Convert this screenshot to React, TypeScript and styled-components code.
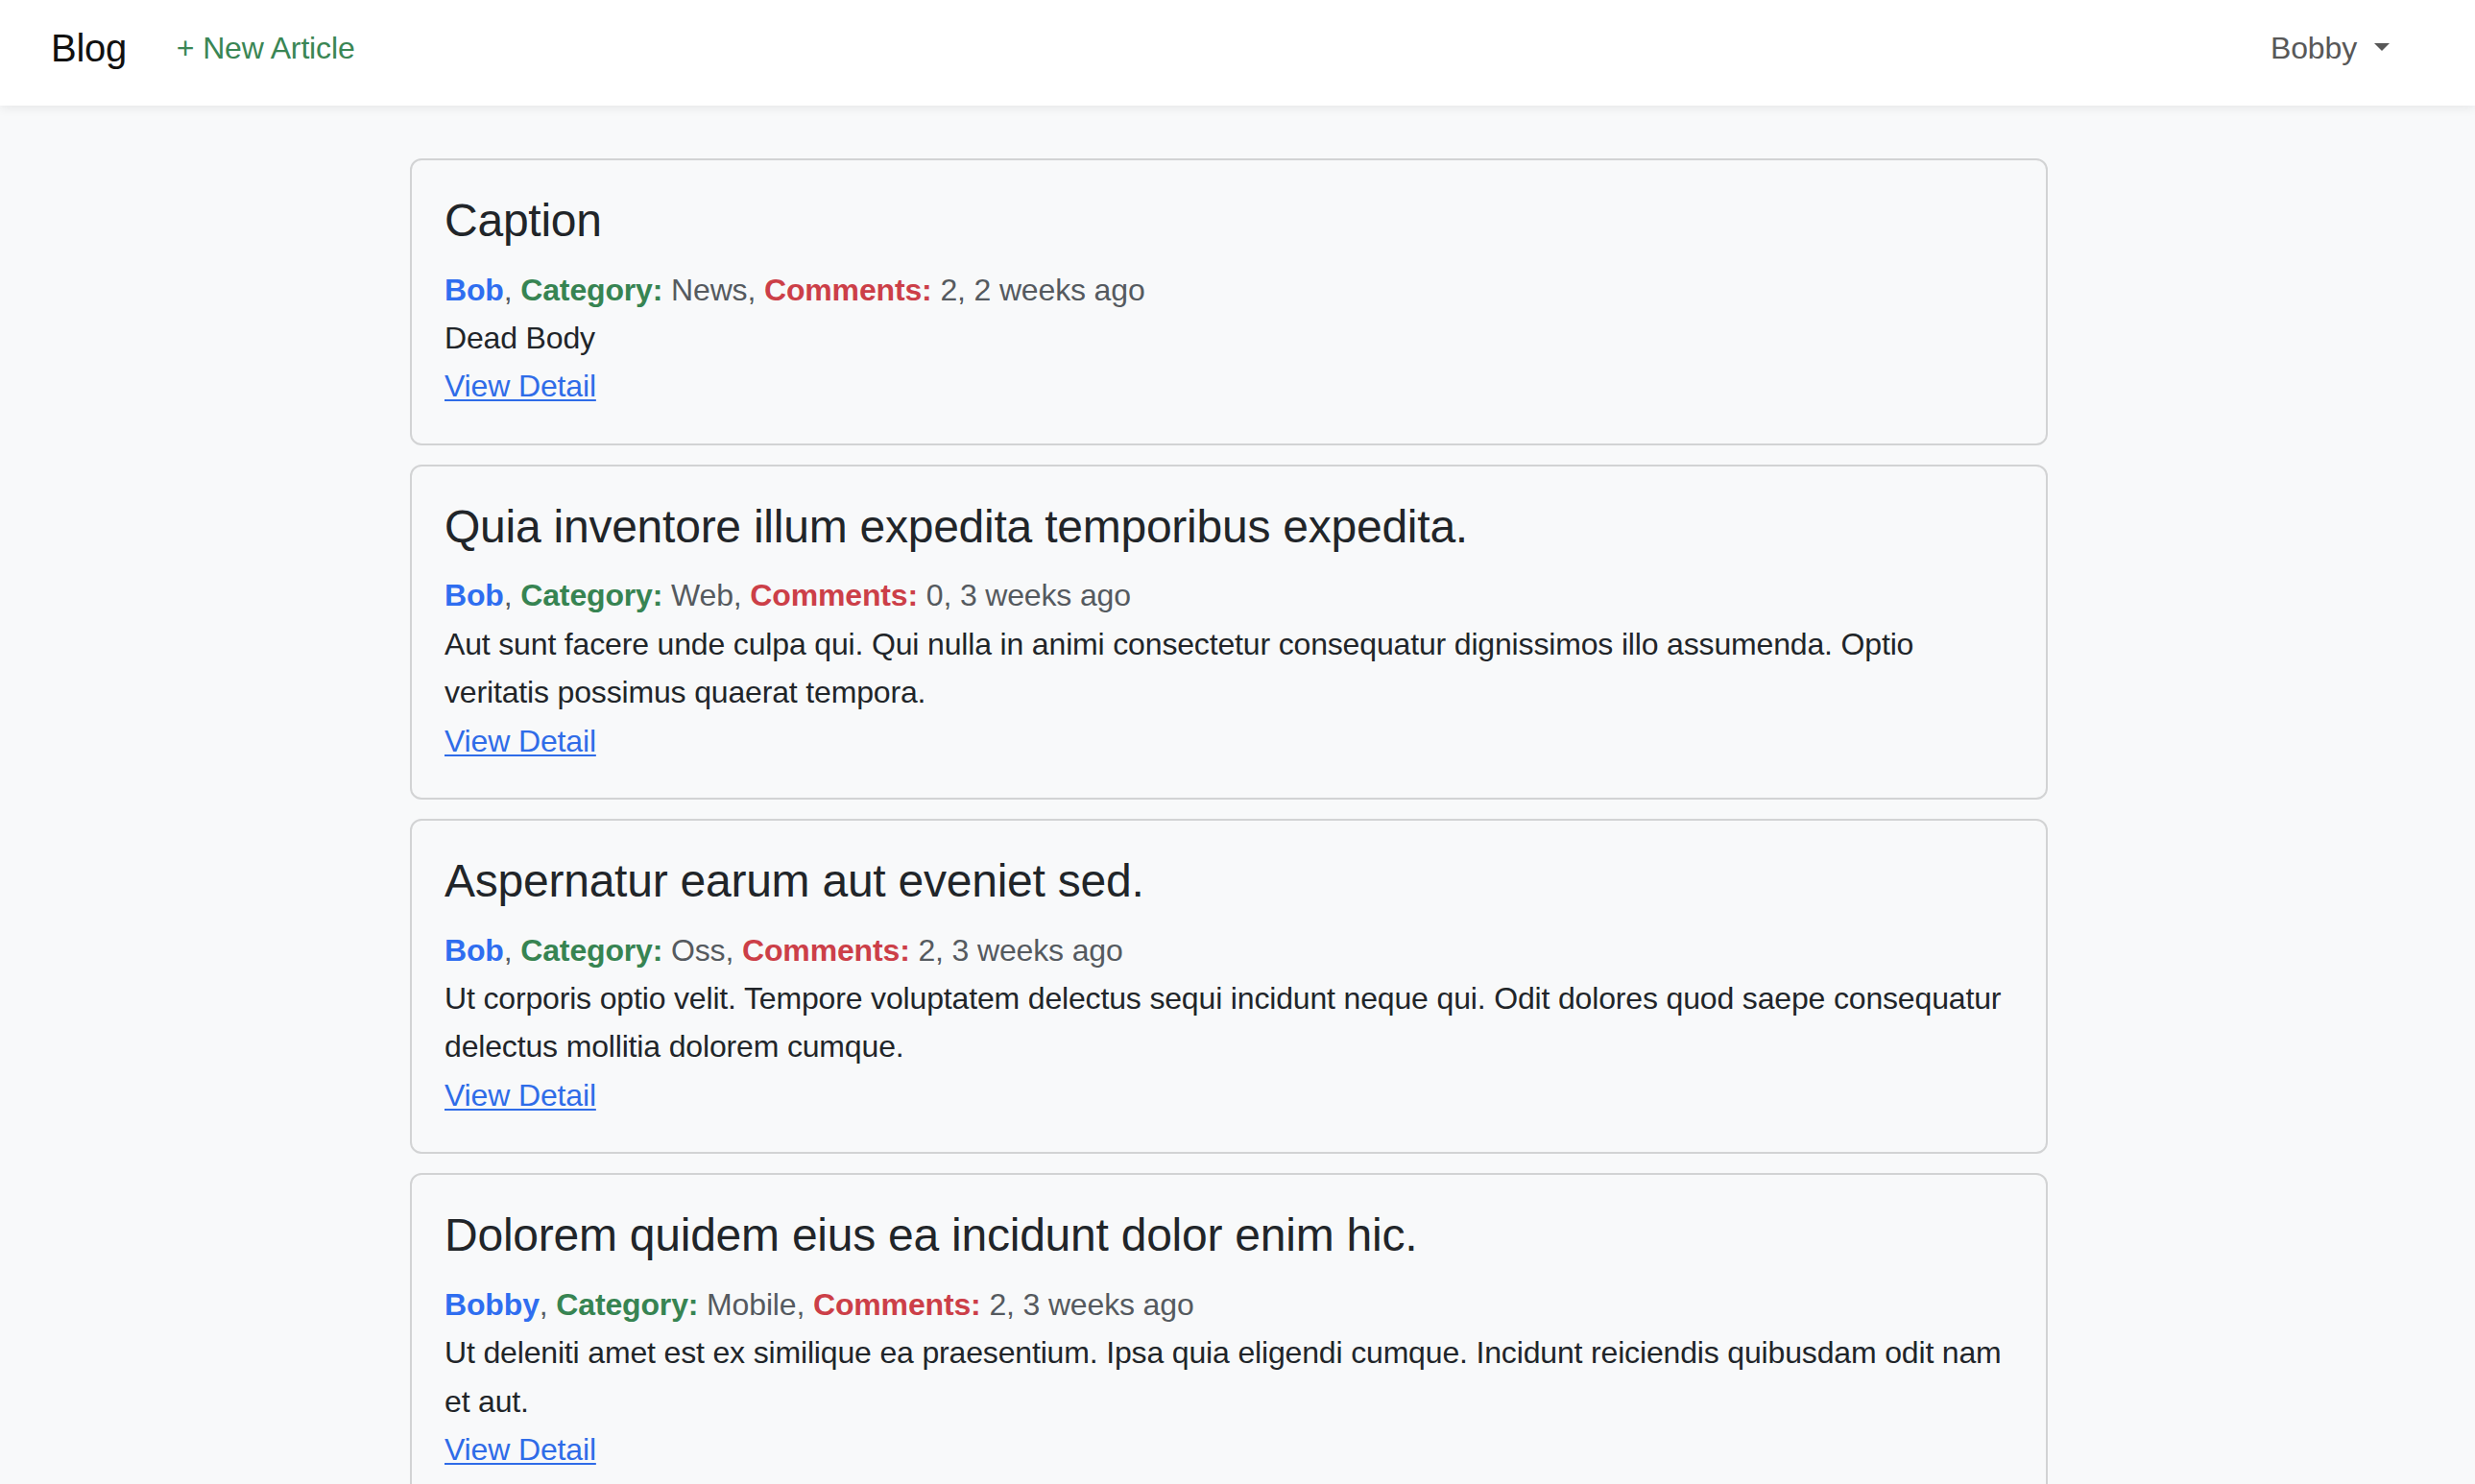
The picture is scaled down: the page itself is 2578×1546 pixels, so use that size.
import React from "react";
import styled, { createGlobalStyle } from "styled-components";

const GlobalStyle = createGlobalStyle`
  html, body {
    margin: 0;
    padding: 0;
    background: #f8f9fa;
    font-family: "Liberation Sans", Arial, Helvetica, sans-serif;
    color: #212529;
  }
  * { box-sizing: border-box; }
`;

const Header = styled.header`
  height: 110px;
  background: #ffffff;
  box-shadow: 0 3px 10px rgba(0, 0, 0, 0.07);
  display: flex;
  align-items: center;
  padding: 0 89px 10px 53px;
`;

const Brand = styled.a`
  font-size: 40px;
  line-height: 60px;
  color: #111;
  text-decoration: none;
  margin-right: 52px;
  letter-spacing: -0.3px;
`;

const NavLink = styled.a`
  font-size: 32px;
  line-height: 48px;
  color: #3a8654;
  text-decoration: none;
  letter-spacing: -0.15px;
`;

const Spacer = styled.div`
  flex: 1;
`;

const UserMenu = styled.div`
  display: flex;
  align-items: center;
  gap: 18px;
  font-size: 32px;
  line-height: 48px;
  color: #585858;
  letter-spacing: -0.15px;
`;

const Caret = styled.span`
  width: 0;
  height: 0;
  border-top: 8px solid #585858;
  border-left: 8.5px solid transparent;
  border-right: 8.5px solid transparent;
  margin-top: -2px;
`;

const Main = styled.main`
  margin: 55px 0 0 427px;
  width: 1706px;
  display: flex;
  flex-direction: column;
  gap: 20px;
  padding-bottom: 40px;
`;

const Card = styled.article`
  border: 2px solid #d2d3d4;
  border-radius: 12px;
  background: #f8f9fa;
  padding: 34px 30px 34px 34px;
`;

const Title = styled.h3`
  margin: 0 0 18px;
  font-size: 48px;
  line-height: 57.6px;
  font-weight: 400;
  color: #212529;
  letter-spacing: -0.24px;
`;

const Meta = styled.div`
  font-size: 32px;
  line-height: 50.4px;
  color: #555a5f;
  letter-spacing: -0.15px;
`;

const MetaStrong = styled.strong<{ $tone: "author" | "category" | "comments" }>`
  font-weight: 700;
  color: ${({ $tone }) =>
    $tone === "author" ? "#2f6ef0" : $tone === "category" ? "#378452" : "#cc3f48"};
`;

const Body = styled.p`
  margin: 0;
  font-size: 32px;
  line-height: 50.4px;
  color: #212529;
  letter-spacing: -0.16px;
`;

const DetailLink = styled.a`
  display: inline-block;
  font-size: 32px;
  line-height: 50.4px;
  color: #2f6ce8;
  text-decoration: underline;
  text-underline-offset: 3px;
  text-decoration-thickness: 2px;
  letter-spacing: -0.15px;
`;

type Article = {
  title: string;
  author: string;
  category: string;
  comments: number;
  ago: string;
  body: string;
};

const articles: Article[] = [
  {
    title: "Caption",
    author: "Bob",
    category: "News",
    comments: 2,
    ago: "2 weeks ago",
    body: "Dead Body",
  },
  {
    title: "Quia inventore illum expedita temporibus expedita.",
    author: "Bob",
    category: "Web",
    comments: 0,
    ago: "3 weeks ago",
    body:
      "Aut sunt facere unde culpa qui. Qui nulla in animi consectetur consequatur dignissimos illo assumenda. Optio veritatis possimus quaerat tempora.",
  },
  {
    title: "Aspernatur earum aut eveniet sed.",
    author: "Bob",
    category: "Oss",
    comments: 2,
    ago: "3 weeks ago",
    body:
      "Ut corporis optio velit. Tempore voluptatem delectus sequi incidunt neque qui. Odit dolores quod saepe consequatur delectus mollitia dolorem cumque.",
  },
  {
    title: "Dolorem quidem eius ea incidunt dolor enim hic.",
    author: "Bobby",
    category: "Mobile",
    comments: 2,
    ago: "3 weeks ago",
    body:
      "Ut deleniti amet est ex similique ea praesentium. Ipsa quia eligendi cumque. Incidunt reiciendis quibusdam odit nam et aut.",
  },
];

export default function App() {
  return (
    <>
      <GlobalStyle />
      <Header>
        <Brand href="#">Blog</Brand>
        <NavLink href="#">+ New Article</NavLink>
        <Spacer />
        <UserMenu>
          <span>Bobby</span>
          <Caret />
        </UserMenu>
      </Header>
      <Main>
        {articles.map((a, i) => (
          <Card key={i}>
            <Title>{a.title}</Title>
            <Meta>
              <MetaStrong $tone="author">{a.author}</MetaStrong>,{" "}
              <MetaStrong $tone="category">Category:</MetaStrong> {a.category},{" "}
              <MetaStrong $tone="comments">Comments:</MetaStrong> {a.comments}, {a.ago}
            </Meta>
            <Body>{a.body}</Body>
            <DetailLink href="#">View Detail</DetailLink>
          </Card>
        ))}
      </Main>
    </>
  );
}
